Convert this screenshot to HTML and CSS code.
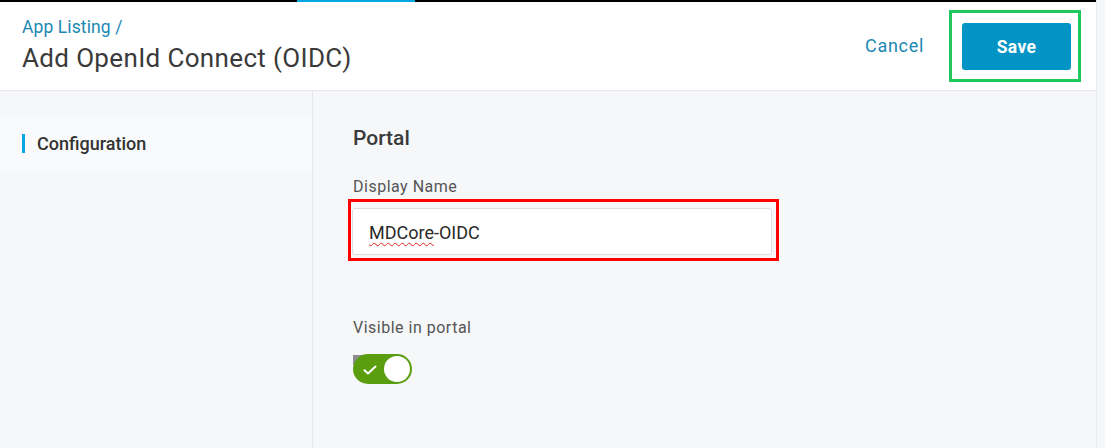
FILE: index.html
```html
<!DOCTYPE html>
<html lang="en">
<head>
    <meta charset="UTF-8">
    <meta name="viewport" content="width=device-width, initial-scale=1.0">
    <title>Add OpenId Connect (OIDC)</title>
    <link rel="stylesheet" href="styles.css">
</head>
<body>

<div class="page">
    <div class="top-strip">
        <span class="strip-dark strip-left"></span>
        <span class="strip-active"></span>
        <span class="strip-dark strip-right"></span>
    </div>

    <header class="header">
        <div class="titles">
            <a class="crumb" href="#">App Listing /</a>
            <h1>Add OpenId Connect (OIDC)</h1>
        </div>
        <div class="actions">
            <a class="cancel" href="#">Cancel</a>
            <div class="highlight-green">
                <button type="button" class="save">Save</button>
            </div>
        </div>
    </header>

    <div class="body">
        <aside class="sidebar">
            <div class="nav-item active">Configuration</div>
        </aside>

        <main class="content">
            <h2>Portal</h2>

            <label class="field-label" for="displayName">Display Name</label>
            <div class="highlight-red">
                <div class="input" id="displayName">
                    <span><span class="misspelt">MDCore</span>-OIDC</span>
                </div>
            </div>

            <div class="field-label visible-label">Visible in portal</div>
            <div class="toggle">
                <svg class="check" width="14" height="10" viewBox="0 0 14 10">
                    <path d="M1.5 5.2 L5 8.4 L12.5 1.5" fill="none" stroke="#fff" stroke-width="2" stroke-linecap="round" stroke-linejoin="round"/>
                </svg>
                <span class="knob"></span>
            </div>
        </main>
    </div>
</div>

</body>
</html>
```

FILE: styles.css
```css
body {
    margin: 0;
    padding: 0;
    font-family: 'Roboto', 'Liberation Sans', sans-serif;
    background-color: #f6f7f9;
    color: #333;
}

.page {
    width: 1096px;
    height: 448px;
    display: flex;
    flex-direction: column;
    border-right: 1px solid #e9ebee;
}

.top-strip {
    display: flex;
    height: 2px;
    background-color: #fff;
}

.strip-dark {
    background-color: #000;
}

.strip-left {
    width: 297px;
}

.strip-active {
    width: 118px;
    background-color: #00a7e1;
}

.strip-right {
    flex: 1;
}

.header {
    height: 88px;
    background-color: #fff;
    border-bottom: 1px solid #e6e8eb;
    display: flex;
    justify-content: space-between;
    align-items: center;
    padding: 0 15px 0 22px;
}

.titles {
    display: flex;
    flex-direction: column;
    margin-top: -2px;
}

.crumb {
    color: #1b88b3;
    text-decoration: none;
    font-size: 17.5px;
    line-height: 21px;
    letter-spacing: 0.1px;
}

h1 {
    margin: 5px 0 0;
    font-size: 26px;
    font-weight: 400;
    line-height: 30px;
    color: #3a3a3a;
    letter-spacing: 0.35px;
}

.actions {
    display: flex;
    align-items: center;
    gap: 25px;
}

.cancel {
    color: #1b88b3;
    text-decoration: none;
    font-size: 18px;
    letter-spacing: 0.7px;
    margin-top: -2px;
}

.highlight-green {
    border: 3px solid #1fc75c;
    padding: 10px 7px 9px 10px;
    display: flex;
}

.save {
    width: 109px;
    height: 47px;
    border: none;
    border-radius: 3px;
    background-color: #0394c6;
    color: #fff;
    font-family: 'Roboto', 'Liberation Sans', sans-serif;
    font-size: 17.5px;
    font-weight: 700;
    letter-spacing: 0.3px;
    cursor: pointer;
}

.body {
    flex: 1;
    display: flex;
}

.sidebar {
    width: 312px;
    border-right: 1px solid #e6e8eb;
    padding-top: 25px;
}

.nav-item {
    height: 55px;
    display: flex;
    align-items: center;
    padding-left: 37px;
    font-size: 18px;
    font-weight: 500;
    color: #333;
    position: relative;
    background-color: #f9fafb;
}

.nav-item.active::before {
    content: "";
    position: absolute;
    left: 22px;
    top: 18px;
    width: 3px;
    height: 19px;
    background-color: #00a7e1;
}

.content {
    flex: 1;
    padding: 0 0 0 40px;
}

h2 {
    margin: 34px 0 0;
    font-size: 21px;
    font-weight: 500;
    line-height: 26px;
    color: #3a3a3a;
}

.field-label {
    display: block;
    margin-top: 26px;
    font-size: 16px;
    line-height: 19px;
    letter-spacing: 0.5px;
    color: #555;
}

.highlight-red {
    width: 420px;
    margin: 3px 0 0 -5px;
    border: 3px solid #f00;
    padding: 6px 4px 3px 1px;
}

.input {
    height: 47px;
    background-color: #fff;
    border: 1px solid #dcdee1;
    border-radius: 3px;
    display: flex;
    align-items: center;
    padding: 1px 0 0 16px;
    box-sizing: border-box;
    font-size: 18px;
    color: #2a2a2a;
}

.misspelt {
    text-decoration: underline wavy #e0241b;
    text-decoration-thickness: 1px;
    text-underline-offset: 3px;
}

.visible-label {
    margin-top: 57px;
}

.toggle {
    position: relative;
    margin-top: 17px;
    width: 59px;
    height: 30px;
    border-radius: 15px;
    background-color: #5a9e10;
    display: flex;
    align-items: center;
    justify-content: space-between;
    padding: 0 2px 0 10px;
    box-sizing: border-box;
}

.toggle::before {
    content: "";
    position: absolute;
    z-index: -1;
    left: 0;
    top: 1px;
    width: 10px;
    height: 10px;
    background-color: #8d8d8d;
}

.check {
    margin-top: 1px;
}

.knob {
    width: 26px;
    height: 26px;
    border-radius: 50%;
    background-color: #fff;
}
```
